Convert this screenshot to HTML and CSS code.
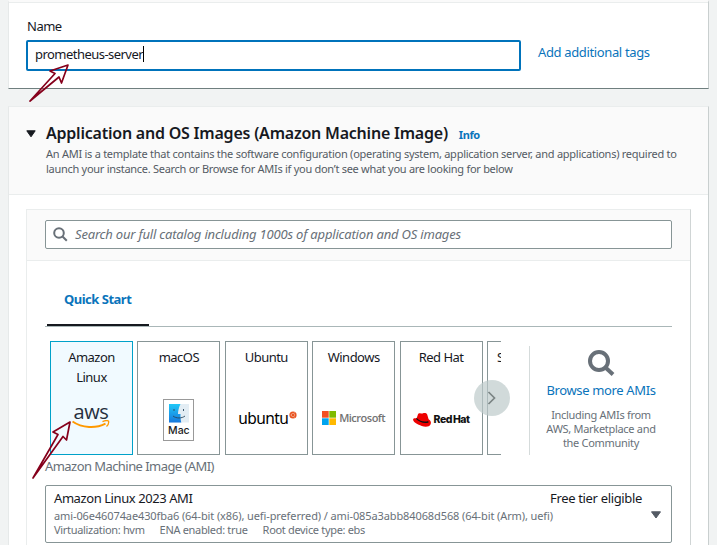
FILE: index.html
```html
<!DOCTYPE html>
<html lang="en">
<head>
<meta charset="utf-8">
<title>Launch an instance</title>
<link rel="stylesheet" href="styles.css">
</head>
<body>
<main class="page">
  <section class="panel panel-name">
    <label class="name-label" for="name">Name</label>
    <div class="name-row">
      <div class="name-input" id="name"><span class="t-value">prometheus-server</span><i class="caret"></i></div>
      <a class="link t-tags">Add additional tags</a>
    </div>
  </section>

  <section class="panel panel-ami">
    <header class="ami-head">
      <svg class="expander" width="10" height="8" viewBox="0 0 10 8"><path d="M.8 .8h8.4L5 6.8z" fill="#16191f" stroke="#16191f" stroke-width="1" stroke-linejoin="round"/></svg>
      <div class="ami-head-text">
        <div class="title-row"><h2>Application and OS Images (Amazon Machine Image)</h2><a class="info">Info</a></div>
        <p><span class="t-d1">An AMI is a template that contains the software configuration (operating system, application server, and applications) required to</span><br><span class="t-d2">launch your instance. Search or Browse for AMIs if you don’t see what you are looking for below</span></p>
      </div>
    </header>

    <div class="catalog">
      <div class="search-zone">
        <div class="search">
          <svg width="15" height="15" viewBox="0 0 15 15" fill="none" stroke="#687078" stroke-width="2"><circle cx="6" cy="6" r="4.8"/><path d="M9.5 9.5l4.3 4.3"/></svg>
          <span class="placeholder">Search our full catalog including 1000s of application and OS images</span>
        </div>
      </div>
      <div class="catalog-body">
        <nav class="tabs"><a class="tab">Quick Start</a></nav>
        <div class="picker">
          <div class="cards-wrap">
            <div class="cards">
              <div class="card selected"><span class="card-name">Amazon<br>Linux</span>
                <div class="logo aws"><b>aws</b><svg width="38" height="10" viewBox="0 0 38 10"><path d="M.5 1.500C10 8.200 24 8.600 33.500 3.600" fill="none" stroke="#ff9900" stroke-width="1.900"/><path d="M30.500 1.600c2-1 4.800-1.200 6-.6.4 1.400-.5 4.200-2 5.600" fill="none" stroke="#ff9900" stroke-width="1.300"/></svg></div>
              </div>
              <div class="card"><span class="card-name">macOS</span>
                <div class="logo mac"><svg width="20" height="19" viewBox="0 0 20 19"><defs><linearGradient id="mb" x1="0" y1="0" x2="0" y2="1"><stop offset="0" stop-color="#20c8f7"/><stop offset="1" stop-color="#1678dd"/></linearGradient></defs><path d="M0 0h20v18.500H0z" fill="#e3edf4"/><path d="M0 0h11.500C9.800 3.500 9 7 9 10h2.500c-.1 3 .1 6 .8 8.500H0z" fill="url(#mb)"/><path d="M5 5v2M14.500 5v2M4 12c3.300 2.600 8.700 2.600 12 0" fill="none" stroke="#28475f" stroke-width=".9"/></svg><b>Mac</b></div>
              </div>
              <div class="card"><span class="card-name">Ubuntu</span>
                <div class="logo ubuntu"><b>ubuntu</b><svg width="8" height="8" viewBox="0 0 8 8"><circle cx="4" cy="4" r="3.600" fill="#e95420"/><circle cx="4" cy="4" r="1.700" fill="none" stroke="#fff" stroke-opacity=".6" stroke-width=".6"/><path d="M1.500 4h1M5 2.200l.5-.8M5 5.800l.5.8" stroke="#fff" stroke-opacity=".6" stroke-width=".7"/></svg></div>
              </div>
              <div class="card"><span class="card-name">Windows</span>
                <div class="logo ms"><svg width="14" height="14" viewBox="0 0 14 14"><path d="M0 0h6.700v6.700H0z" fill="#f25022"/><path d="M7.300 0H14v6.700H7.300z" fill="#7fba00"/><path d="M0 7.300h6.700V14H0z" fill="#00a4ef"/><path d="M7.300 7.300H14V14H7.300z" fill="#ffb900"/></svg><b>Microsoft</b></div>
              </div>
              <div class="card"><span class="card-name">Red Hat</span>
                <div class="logo redhat"><svg width="18" height="14" viewBox="0 0 18 14"><path d="M3.600 5.500L5 1.200C5.300.2 6.300-.1 7.200.3c1 .4 2 .4 3-.1 1.600-.7 3.300-.2 4 1.300l1.400 4.800c2 1.200 2.900 3.200 1.900 5.200-1.200 2.400-5 2.800-8.700 1.500C4.500 11.700.6 9.400.1 7.100-.2 5.600 1.600 5 3.600 5.500z" fill="#e00"/><path d="M3.600 4.800c2 2.900 7.600 4.800 11.600 3.100l.4 1.600c-4 1.700-10-.6-12.500-3.400z" fill="#111"/></svg><b>Red Hat</b></div>
              </div>
              <div class="card"><span class="card-name cut">S</span></div>
            </div>
            <div class="next"><svg width="10" height="16" viewBox="0 0 10 16" fill="none" stroke="#7b8484" stroke-width="1.700"><path d="M1.500 2l6 6-6 6"/></svg></div>
          </div>
          <div class="browse">
            <svg width="28" height="28" viewBox="0 0 28 28" fill="none" stroke="#687078" stroke-width="4"><circle cx="12" cy="12" r="9"/><path d="M18.500 18.500l7.500 7"/></svg>
            <a class="link t-browse">Browse more AMIs</a>
            <p>Including AMIs from<br>AWS, Marketplace and<br>the Community</p>
          </div>
        </div>
        <div class="ami-label">Amazon Machine Image (AMI)</div>
        <div class="select">
          <div class="select-main">
            <div class="select-top"><span class="t-ami">Amazon Linux 2023 AMI</span><span class="t-free">Free tier eligible</span></div>
            <div class="meta t-ids">ami-06e46074ae430fba6 (64-bit (x86), uefi-preferred) / ami-085a3abb84068d568 (64-bit (Arm), uefi)</div>
            <div class="meta specs"><span>Virtualization: hvm</span><span>ENA enabled: true</span><span>Root device type: ebs</span></div>
          </div>
          <svg class="down" width="10" height="8" viewBox="0 0 10 8"><path d="M.5 .8h9L5 7z" fill="#545b64" stroke="#545b64" stroke-linejoin="round"/></svg>
        </div>
      </div>
    </div>
  </section>
</main>
<svg class="arrows" width="90" height="490" viewBox="0 0 90 490" fill="none" stroke="#85001b" stroke-width="1.700" stroke-linejoin="round"><path d="M68 65L50 71l5 2.500L30 101l29-24 2.500 6z"/><path d="M70 422L53 432l5 2.500L33 478l30-41.500 3.500 3.500z"/></svg>
</body>
</html>
```
FILE: styles.css
```css
* { box-sizing: border-box; }
body {
  margin: 0;
  height: 545px;
  overflow: hidden;
  background: #f1f3f3;
  color: #16191f;
  font: 13px/20px "Noto Sans", "Open Sans", sans-serif;
}
h2, p { margin: 0; }
.page { padding: 0 8px; width: 717px; }
.panel {
  width: 701px;
  background: #fff;
  border-left: 1px solid #e6e9e9;
  border-right: 1px solid #c9cfcf;
}
.panel-name {
  height: 89px;
  border-top: 2px solid #fafafa;
  border-bottom: 1px solid #6f7f7f;
  padding: 0 17px;
  box-shadow: inset 0 1px #eaeded;
}
.name-label { display: block; padding: 14px 0 0 1px; height: 38px; letter-spacing: -.5px; }
.name-row { display: flex; gap: 17px; }
.name-input {
  display: flex;
  align-items: center;
  width: 495px;
  height: 31px;
  padding: 0 8px 3px 7px;
  border: 2px solid #0073bb;
  border-radius: 2px;
}
.t-value { letter-spacing: -.54px; }
.caret { width: 1px; height: 16px; background: #000; }
.link { color: #0a74bb; }
.t-tags { padding-top: 2px; letter-spacing: -.36px; }

.panel-ami {
  margin-top: 17px;
  height: 460px;
  border-top: 1px solid #eaeded;
}
.ami-head {
  display: flex;
  height: 88px;
  padding: 16px 17px 0;
  background: #fafafa;
  border-bottom: 1px solid #eaeded;
}
.expander { margin: 7px 10px 0 0; flex: none; }
.ami-head-text { white-space: nowrap; }
.title-row { display: flex; gap: 11px; }
h2 { font-size: 16px; line-height: 20px; font-weight: 600; letter-spacing: -.22px; }
.info { font-size: 11px; font-weight: 700; color: #0a74bb; padding-top: 2px; letter-spacing: -.4px; }
.ami-head p { font-size: 11px; line-height: 15px; color: #545b64; padding-top: 1px; }
.t-d1 { letter-spacing: -.26px; }
.t-d2 { letter-spacing: -.28px; }

.catalog {
  margin: 14px 17px 0;
  width: 665px;
  height: 340px;
  border: 1px solid #eaeded;
  border-right-color: #d0d5d5;
}
.search-zone {
  height: 51px;
  padding: 10px 18px;
  background: #fafafa;
  border-bottom: 1px solid #eaeded;
}
.search {
  display: flex;
  align-items: center;
  gap: 7px;
  height: 29px;
  padding: 0 7px 1px;
  background: #fff;
  border: 1px solid #879596;
  border-radius: 2px;
}
.placeholder { font-style: italic; color: #687078; letter-spacing: -.185px; }
.catalog-body { padding: 0 18px; }
.tabs { height: 66px; border-bottom: 1px solid #aab7b8; padding-left: 2px; }
.tab {
  display: block;
  width: 102px;
  height: 65px;
  padding: 28px 0 0 17px;
  border-bottom: 2px solid #16191f;
  color: #0a74bb;
  font-weight: 700;
  letter-spacing: -.5px;
}
.picker { display: flex; height: 129px; padding: 14px 0 0 5px; }
.cards-wrap { position: relative; width: 451px; height: 114px; flex: none; }
.cards { display: grid; grid-template-columns: repeat(6, 83px); column-gap: 4.4px; height: 114px; overflow: hidden; }
.card {
  display: flex;
  flex-direction: column;
  align-items: center;
  height: 114px;
  padding-top: 5px;
  border: 1px solid #879596;
  background: #fff;
}
.card.selected { border-color: #00a1c9; background: #f1faff; }
.card-name { height: 52px; text-align: center; white-space: nowrap; letter-spacing: -.52px; }
.cut { align-self: flex-start; padding-left: 9px; }
.logo { display: flex; align-items: center; white-space: nowrap; }
.aws { flex-direction: column; margin-left: -1px; }
.aws b { font: 500 20px/19px "Open Sans", sans-serif; letter-spacing: -.4px; color: #252f3e; margin-top: 3px; }
.aws svg { margin-top: -1px; }
.mac { flex-direction: column; width: 31px; height: 42px; border: 1px solid #999; padding-top: 4px; }
.mac b { font: 500 10.5px/16px Inter, sans-serif; color: #222; }
.ubuntu { align-items: flex-start; margin: 12px 0 0 3px; }
.ubuntu b { font: 400 15.5px/14px "Noto Sans", sans-serif; letter-spacing: -.55px; color: #000; }
.ubuntu svg { margin: 0 0 0 1px; }
.ms { margin-top: 12px; gap: 3px; }
.ms b { font: 600 11px/14px "Open Sans", sans-serif; color: #737373; letter-spacing: -.5px; }
.redhat { margin-top: 14px; gap: 3px; }
.redhat b { font: 800 10.5px/14px Inter, sans-serif; color: #111; letter-spacing: -.5px; word-spacing: -.8px; }
.next {
  position: absolute;
  left: 424px;
  top: 39px;
  width: 36px;
  height: 36px;
  display: grid;
  place-items: center;
  border-radius: 50%;
  background: rgba(190, 203, 203, .7);
}
.browse {
  display: flex;
  flex-direction: column;
  align-items: center;
  width: 143px;
  height: 109px;
  margin: 5px 0 0 28px;
  padding-top: 3px;
  border-left: 1px solid #d5dbdb;
  text-align: center;
  white-space: nowrap;
}
.t-browse { margin-top: 3px; letter-spacing: -.36px; }
.browse p { font-size: 11px; line-height: 14px; color: #687078; margin-top: 8px; letter-spacing: -.3px; }
.ami-label { height: 29px; color: #687078; letter-spacing: -.56px; }
.select {
  display: flex;
  height: 58px;
  border: 1px solid #879596;
  border-radius: 2px;
  padding: 2px 10px 0 8px;
}
.select-main { width: 588px; white-space: nowrap; }
.select-top { display: flex; justify-content: space-between; height: 21px; }
.t-ami { letter-spacing: -.42px; }
.t-free { letter-spacing: -.34px; }
.meta { font-size: 11px; line-height: 14px; color: #687078; }
.t-ids { letter-spacing: -.105px; }
.specs { display: flex; gap: 15px; letter-spacing: -.32px; }
.down { margin: 23px 0 0 9px; }
.arrows { position: absolute; left: 0; top: 0; }
```
